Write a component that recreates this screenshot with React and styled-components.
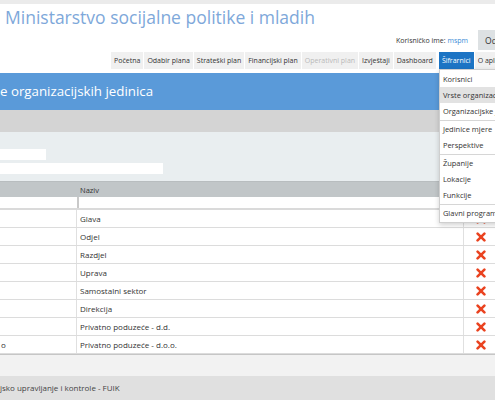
import styled, { createGlobalStyle } from "styled-components"

const GlobalStyle = createGlobalStyle`
    html, body {
        margin: 0;
        padding: 0;
        background: #ffffff;
    }
    * {
        box-sizing: border-box;
    }
    body {
        font-family: "Open Sans", "DejaVu Sans", sans-serif;
        color: #333;
    }
`

const navItems = [
    { label: "Početna" },
    { label: "Odabir plana" },
    { label: "Strateški plan" },
    { label: "Financijski plan" },
    { label: "Operativni plan", disabled: true },
    { label: "Izvještaji" },
    { label: "Dashboard" },
]

const menuGroups = [
    ["Korisnici", "Vrste organizacijskih jedinica", "Organizacijske jedinice"],
    ["Jedinice mjere", "Perspektive"],
    ["Županije", "Lokacije", "Funkcije"],
    ["Glavni programi"],
]

const rows = [
    { code: "", name: "Glava" },
    { code: "", name: "Odjel" },
    { code: "", name: "Razdjel" },
    { code: "", name: "Uprava" },
    { code: "", name: "Samostalni sektor" },
    { code: "", name: "Direkcija" },
    { code: "", name: "Privatno poduzeće - d.d." },
    { code: "o", name: "Privatno poduzeće - d.o.o." },
]

function RemoveIcon(){
    return (
        <svg width="10" height="10" viewBox="0 0 10 10">
            <path d="M1.6 1.6 L8.4 8.4 M8.4 1.6 L1.6 8.4" stroke="#ea4320" strokeWidth="2.6" strokeLinecap="round"/>
        </svg>
    )
}

export default function App(){
    return (
        <>
            <GlobalStyle/>
            <Page>
                <TopStrip/>
                <Header>
                    <Title>Ministarstvo socijalne politike i mladih</Title>
                    <UserRow>
                        <UserLabel>Korisničko ime: <UserName>mspm</UserName></UserLabel>
                        <LogoutButton>Odjava</LogoutButton>
                    </UserRow>
                    <Nav>
                        {navItems.map((item)=>(
                            <NavItem key={item.label} $disabled={item.disabled}>{item.label}</NavItem>
                        ))}
                        <MenuAnchor>
                            <NavItem $active>Šifrarnici</NavItem>
                            <Dropdown>
                                {menuGroups.map((group, gi)=>(
                                    <MenuGroup key={gi} $first={gi === 0}>
                                        {group.map((entry)=>(
                                            <MenuItem key={entry} $hover={entry.startsWith("Vrste")}>{entry}</MenuItem>
                                        ))}
                                    </MenuGroup>
                                ))}
                            </Dropdown>
                        </MenuAnchor>
                        <NavItem>O aplikaciji</NavItem>
                    </Nav>
                </Header>

                <PageTitle>e organizacijskih jedinica</PageTitle>
                <Toolbar/>

                <FilterPanel>
                    <FieldBox $w={46}/>
                    <FieldBox $w={163}/>
                </FilterPanel>

                <Table>
                    <HeadRow>
                        <HeadCell/>
                        <HeadCell>Naziv</HeadCell>
                        <HeadCell/>
                    </HeadRow>
                    <FilterRow>
                        <FilterCell/>
                        <FilterCell $divider/>
                        <FilterCell/>
                    </FilterRow>
                    {rows.map((row, i)=>(
                        <DataRow key={i}>
                            <Cell $border $pad={1}>{row.code}</Cell>
                            <Cell $border $pad={3}>{row.name}</Cell>
                            <ActionCell><RemoveIcon/></ActionCell>
                        </DataRow>
                    ))}
                </Table>

                <Spacer/>
                <Footer>jsko upravljanje i kontrole - FUIK</Footer>
            </Page>
        </>
    )
}

const Page = styled.div`
    position: relative;
    width: 495px;
    height: 400px;
    overflow: hidden;
    display: flex;
    flex-direction: column;
    background-color: #ffffff;
`

const TopStrip = styled.div`
    height: 4px;
    flex-shrink: 0;
    background-color: #ebebeb;
`

const Header = styled.div`
    position: relative;
    z-index: 5;
    flex-shrink: 0;
    height: 69px;
    padding-bottom: 4px;
    display: flex;
    flex-direction: column;
    background-color: #ffffff;
`

const Title = styled.h1`
    margin: 0;
    padding-left: 5px;
    padding-top: 1px;
    height: 25px;
    font-size: 17.5px;
    line-height: 24px;
    font-weight: 400;
    color: #7ea8da;
    white-space: nowrap;
`

const UserRow = styled.div`
    margin-top: 1px;
    height: 20px;
    padding-left: 396px;
    display: flex;
    align-items: center;
    white-space: nowrap;
`

const UserLabel = styled.span`
    font-size: 7px;
    color: #333;
`

const UserName = styled.span`
    color: #3d8ad6;
`

const LogoutButton = styled.div`
    margin-left: 10px;
    height: 20px;
    padding: 0 7px;
    display: flex;
    align-items: center;
    flex-shrink: 0;
    font-size: 8.5px;
    color: #333;
    background-color: #dde1e3;
`

const Nav = styled.div`
    margin-top: 2px;
    height: 17px;
    padding-left: 111px;
    display: flex;
    gap: 1px;
    white-space: nowrap;
`

const NavItem = styled.div`
    height: 17px;
    padding: 0 3px;
    display: flex;
    align-items: center;
    flex-shrink: 0;
    font-size: 7px;
    background-color: ${(p)=> p.$active ? "#1c74c4" : "#f0f0f0"};
    color: ${(p)=> p.$active ? "#ffffff" : p.$disabled ? "#b9b9b9" : "#333"};
`

const MenuAnchor = styled.div`
    position: relative;
    flex-shrink: 0;
    margin-left: 2px;
`

const Dropdown = styled.div`
    position: absolute;
    top: 100%;
    left: 0;
    width: 120px;
    padding: 1px 0;
    background-color: #ffffff;
    border: 1px solid #cfcfcf;
    box-shadow: 0 2px 5px rgba(0,0,0,0.18);
`

const MenuGroup = styled.div`
    border-top: ${(p)=> p.$first ? "none" : "1px solid #d6d6d6"};
    margin-top: ${(p)=> p.$first ? "0" : "1px"};
`

const MenuItem = styled.div`
    height: 16px;
    padding-left: 3px;
    display: flex;
    align-items: center;
    font-size: 7.5px;
    color: #333;
    white-space: nowrap;
    background-color: ${(p)=> p.$hover ? "#e2e2e2" : "transparent"};
`

const PageTitle = styled.div`
    flex-shrink: 0;
    height: 37px;
    display: flex;
    align-items: center;
    padding-bottom: 2px;
    font-size: 13.3px;
    color: #ffffff;
    background-color: #5a9ad9;
    white-space: nowrap;
`

const Toolbar = styled.div`
    flex-shrink: 0;
    height: 22px;
    background-color: #d4d4d4;
`

const FilterPanel = styled.div`
    flex-shrink: 0;
    height: 49px;
    padding-top: 17px;
    display: flex;
    flex-direction: column;
    gap: 3px;
    background-color: #e9eef0;
`

const FieldBox = styled.div`
    width: ${(p)=> p.$w}px;
    height: 11px;
    background-color: #ffffff;
`

const Table = styled.div`
    flex-shrink: 0;
    display: flex;
    flex-direction: column;
    border-bottom: 1px solid #c6c6c6;
`

const columns = `
    display: grid;
    grid-template-columns: 77px 387px 34px;
`

const HeadRow = styled.div`
    ${columns}
    height: 16px;
    background-color: #c1c6c8;
    border-top: 1px solid #b8bdbf;
`

const HeadCell = styled.div`
    padding-left: 3px;
    display: flex;
    align-items: center;
    font-size: 7.5px;
    color: #333;
`

const FilterRow = styled.div`
    ${columns}
    height: 13px;
    background-color: #ffffff;
    border-bottom: 2px solid #dadada;
`

const FilterCell = styled.div`
    border-left: ${(p)=> p.$divider ? "2px solid #c9c9c9" : "none"};
`

const DataRow = styled.div`
    ${columns}
    height: 18px;
    border-bottom: 1px solid #dcdcdc;
    background-color: #ffffff;
`

const Cell = styled.div`
    padding-left: ${(p)=> p.$pad}px;
    display: flex;
    align-items: center;
    font-size: 8px;
    color: #333;
    white-space: nowrap;
    border-right: ${(p)=> p.$border ? "1px solid #e0e0e0" : "none"};
`

const ActionCell = styled.div`
    display: flex;
    align-items: center;
    justify-content: flex-start;
    padding-left: 12px;
`

const Spacer = styled.div`
    flex-shrink: 0;
    height: 21px;
    background-color: #f2f2f2;
`

const Footer = styled.div`
    flex: 1;
    padding-top: 6px;
    font-size: 8px;
    color: #444;
    background-color: #e0e0e0;
    white-space: nowrap;
`
